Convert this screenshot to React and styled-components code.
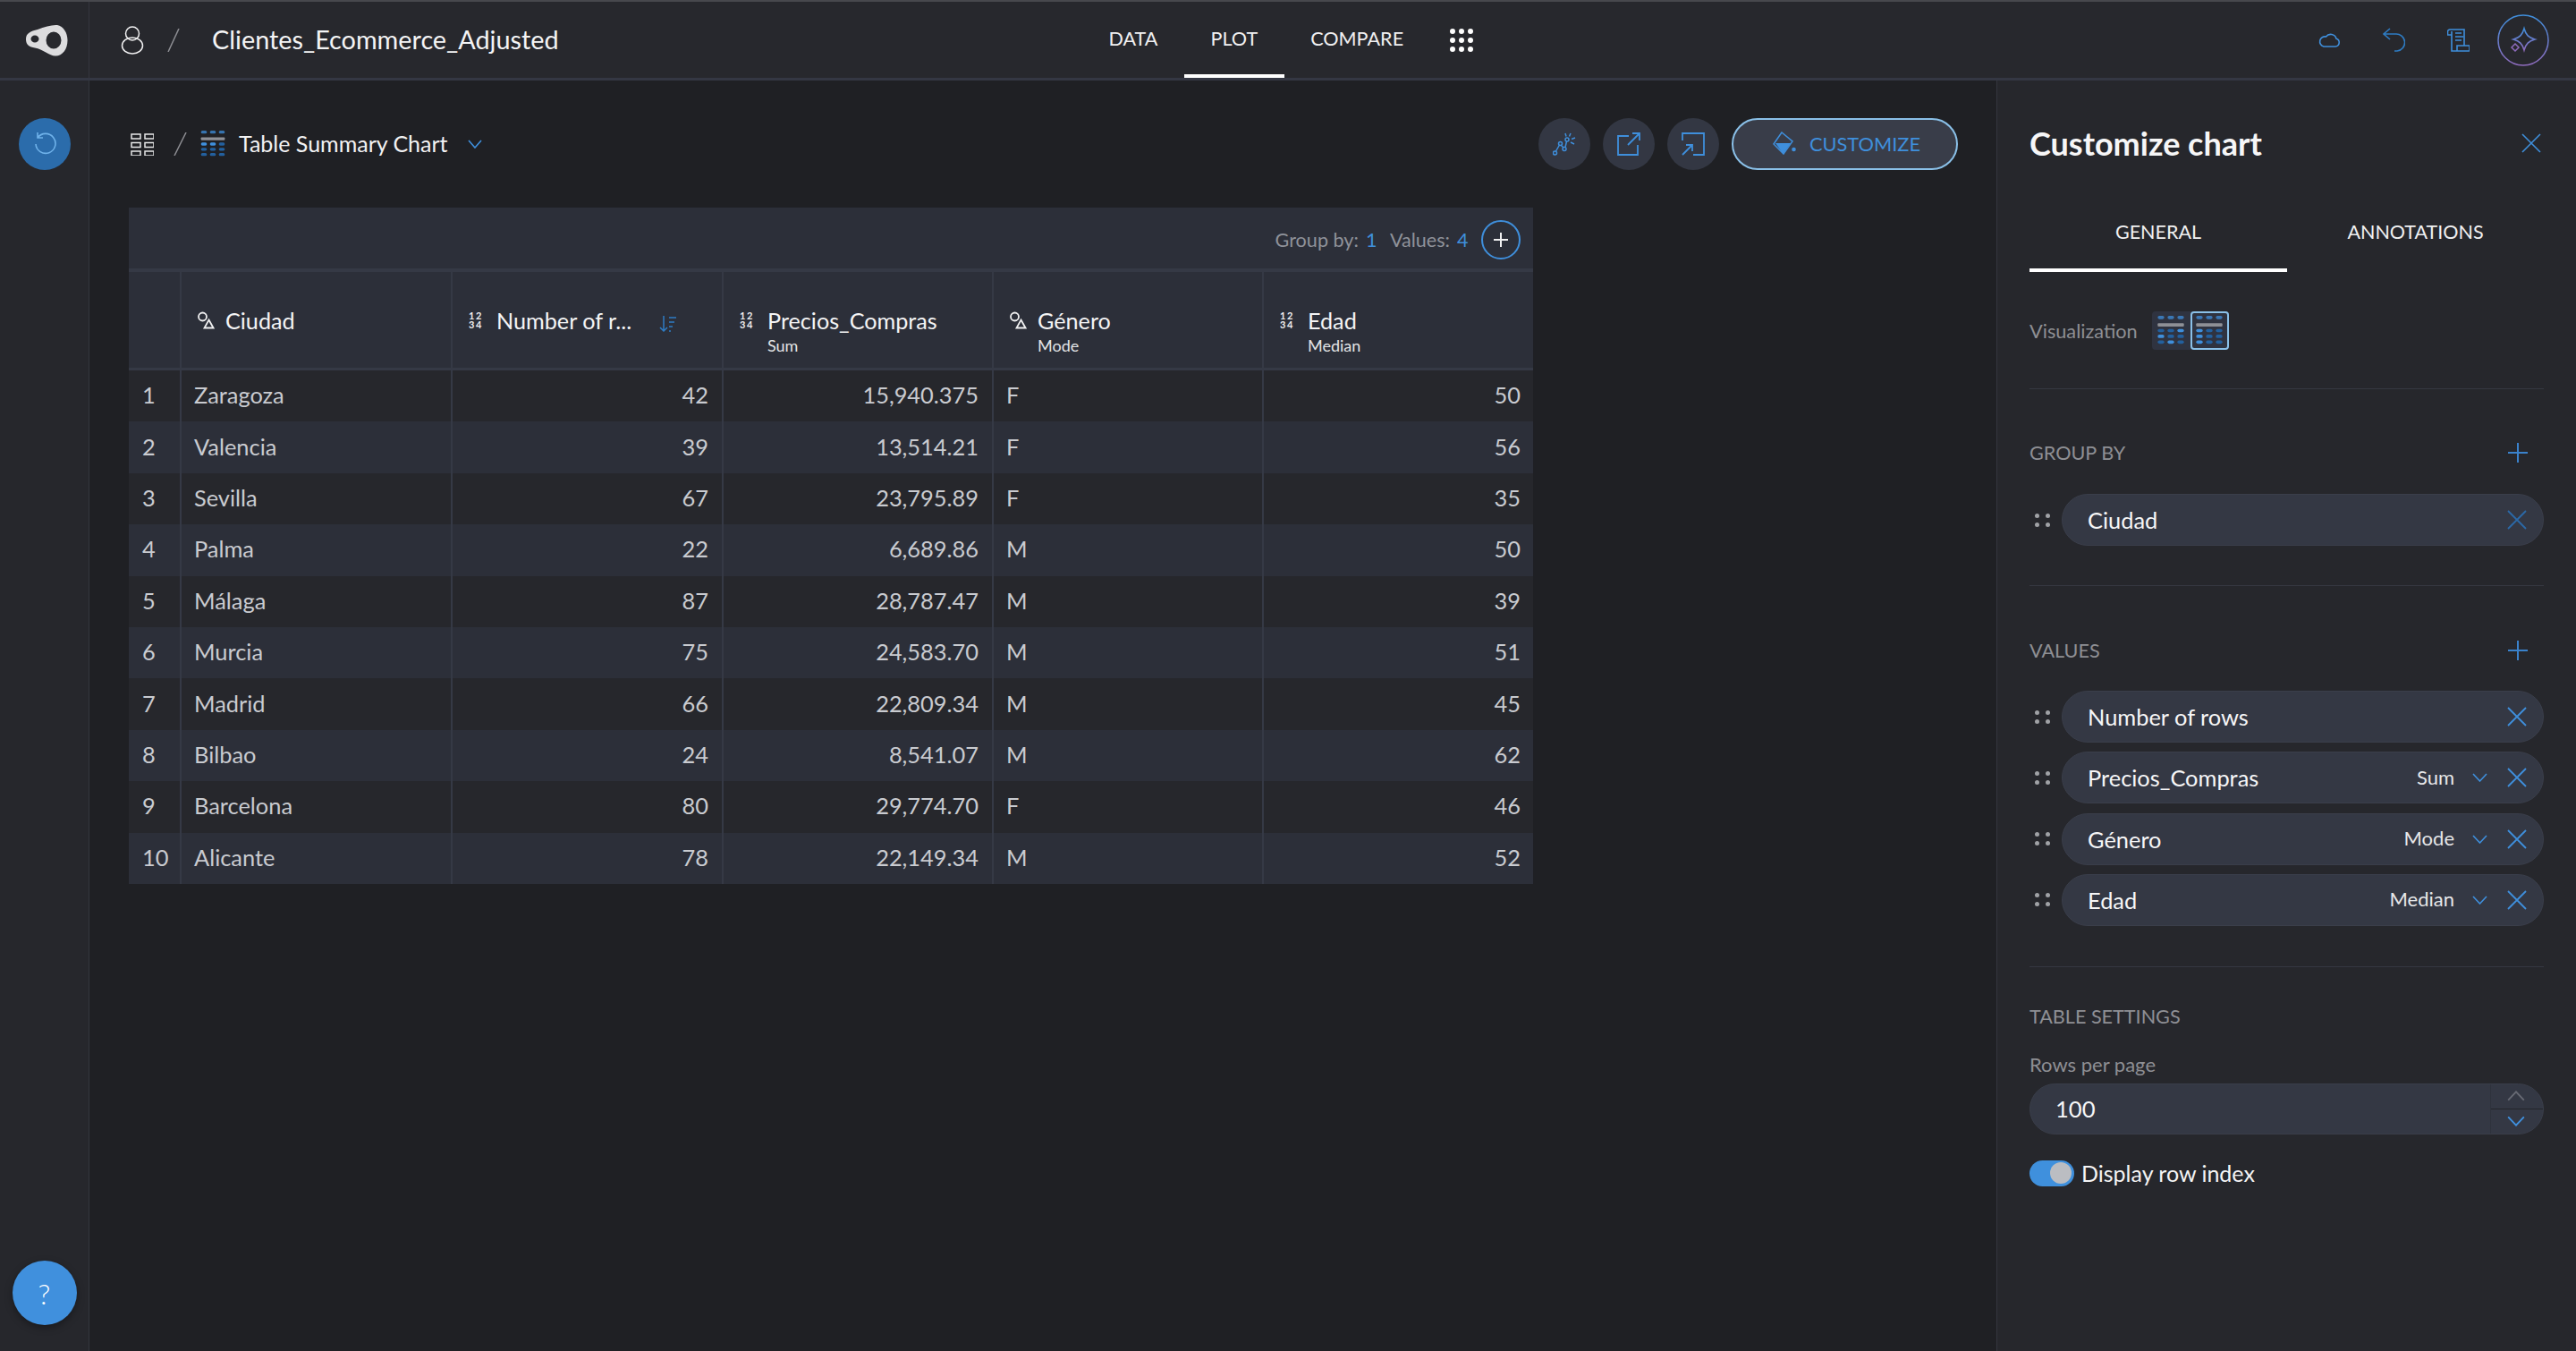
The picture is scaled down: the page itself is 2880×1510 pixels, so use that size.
import React from 'react'
import styled, { createGlobalStyle } from 'styled-components'

const blue = '#3f8fdc'
const cols = '57px 303px 303px 302px 302px 303px'

const Global = createGlobalStyle`
  html, body { margin: 0; padding: 0; background: #1f2024; }
  * { box-sizing: border-box; }
  body { font-family: Lato, "Open Sans", sans-serif; color: #fff; }
`
const Page = styled.div`
  width: 2880px;
  height: 1510px;
  display: flex;
  flex-direction: column;
  overflow: hidden;
`
const Header = styled.header`
  height: 90px;
  flex: none;
  display: flex;
  align-items: stretch;
  background: #27282d;
  border-top: 2px solid #47484d;
  border-bottom: 3px solid #343743;
`
const HeaderLeft = styled.div`
  flex: 0 0 1210px;
  display: flex;
  align-items: center;
`
const LogoCell = styled.div`
  width: 100px;
  height: 100%;
  display: flex;
  align-items: center;
  padding-left: 28px;
  border-right: 1px solid #34363e;
`
const UserIcon = styled.svg`
  margin-left: 35px;
`
const HeaderSlash = styled.svg`
  margin-left: 26px;
`
const Title = styled.div`
  margin-left: 36px;
  padding-bottom: 2px;
  font-size: 28.8px;
  line-height: 34px;
  color: #f4f4f5;
`
const Nav = styled.nav`
  display: flex;
  align-items: stretch;
`
const NavItem = styled.div`
  padding: 1px 29.5px 0;
  display: flex;
  align-items: center;
  font-size: 21.6px;
  color: #f0f0f1;
  height: 85px;
  margin-bottom: -3px;
  border-bottom: 4px solid ${p => (p.$active ? '#fff' : 'transparent')};
`
const Dots = styled.div`
  display: grid;
  grid-template-columns: repeat(3, 6px);
  gap: 4px;
  align-self: center;
  margin-left: 22.5px;
  span {
    width: 6px;
    height: 6px;
    border-radius: 50%;
    background: #fff;
  }
`
const HeaderRight = styled.div`
  flex: 1;
  display: flex;
  align-items: center;
  justify-content: flex-end;
  padding-right: 30px;
  gap: 47px;
`
const AiButton = styled.svg`
  margin-left: -16px;
`
const Body = styled.div`
  flex: 1;
  display: flex;
  min-height: 0;
`
const Sidebar = styled.aside`
  width: 100px;
  flex: none;
  display: flex;
  flex-direction: column;
  align-items: center;
  justify-content: space-between;
  padding: 42px 0 29px;
  background: #26272c;
  border-right: 1px solid #34363e;
`
const RefreshButton = styled.div`
  width: 58px;
  height: 58px;
  margin-left: 1px;
  border-radius: 50%;
  background: #2b6cab;
  display: flex;
  align-items: center;
  justify-content: center;
`
const HelpButton = styled.div`
  width: 72px;
  height: 72px;
  border-radius: 50%;
  background: #4090dd;
  box-shadow: 0 3px 8px rgba(0, 0, 0, .35);
  display: flex;
  align-items: center;
  justify-content: center;
  font-size: 32px;
  font-weight: 300;
  color: #fff;
`
const Main = styled.main`
  flex: 1;
  min-width: 0;
  padding: 42px 43px 0 44px;
  background: #1f2024;
`
const Toolbar = styled.div`
  display: flex;
  align-items: center;
  justify-content: space-between;
  height: 58px;
`
const Crumbs = styled.div`
  display: flex;
  align-items: center;
  margin-left: 2px;
`
const CrumbSlash = styled.svg`
  margin: 0 14px 0 22px;
`
const CrumbText = styled.span`
  margin-left: 14px;
  padding-bottom: 2px;
  font-size: 25px;
  color: #f2f2f3;
`
const CrumbChevron = styled.svg`
  margin-left: 22px;
`
const Actions = styled.div`
  display: flex;
  align-items: center;
  gap: 14px;
`
const RoundButton = styled.div`
  width: 58px;
  height: 58px;
  border-radius: 50%;
  background: #333743;
  display: flex;
  align-items: center;
  justify-content: center;
`
const CustomizeButton = styled.div`
  width: 253px;
  height: 58px;
  border-radius: 29px;
  background: #393d49;
  border: 2px solid #8ac0e8;
  display: flex;
  align-items: center;
  justify-content: center;
  gap: 15px;
  padding: 0 0 2px 4px;
  font-size: 21.8px;
  color: ${blue};
`
const Table = styled.section`
  width: 1570px;
  margin-top: 42px;
`
const TableTop = styled.div`
  height: 72px;
  display: flex;
  align-items: center;
  justify-content: flex-end;
  padding: 3px 14px 0 0;
  background: #2c2f39;
  border-bottom: 4px solid #353945;
  font-size: 21.6px;
  color: #8f929a;
`
const Count = styled.span`
  margin: 0 14.5px 0 8px;
  color: ${blue};
`
const AddCircle = styled.div`
  width: 44px;
  height: 44px;
  border-radius: 50%;
  border: 2px solid ${blue};
  display: flex;
  align-items: center;
  justify-content: center;
`
const HeadRow = styled.div`
  display: grid;
  grid-template-columns: ${cols};
  height: 110px;
  background: #2c2f39;
  border-bottom: 3px solid #353945;
`
const HeadCell = styled.div`
  display: grid;
  grid-template-columns: 18px auto;
  grid-template-rows: 26px 24px;
  column-gap: 14px;
  row-gap: 3px;
  align-content: start;
  align-items: center;
  padding: 41px 0 0 17px;
  border-left: 2px solid #353945;
  position: relative;
  &:first-child { border-left: 0; }
`
const HeadTitle = styled.div`
  font-size: 25.2px;
  color: #f4f4f5;
  white-space: nowrap;
`
const HeadSub = styled.div`
  grid-column: 2;
  font-size: 18px;
  color: #e3e4e6;
`
const NumIcon = styled.div`
  font-size: 11px;
  letter-spacing: 1.5px;
  color: #f0f0f1;
  font-weight: 700;
  text-align: center;
  span {
    display: block;
    line-height: 10px;
  }
`
const SortIcon = styled.svg`
  position: absolute;
  left: 231px;
  top: 49px;
`
const Row = styled.div`
  display: grid;
  grid-template-columns: ${cols};
  height: 57.4px;
  background: ${p => (p.$odd ? '#26272c' : '#2c2f39')};
`
const Cell = styled.div`
  display: flex;
  align-items: center;
  justify-content: ${p => (p.$right ? 'flex-end' : 'flex-start')};
  padding: 0 ${p => (p.$idx ? '0' : '15px')} 3px ${p => (p.$idx ? '15px' : '14px')};
  font-size: 25.4px;
  font-variant-numeric: tabular-nums;
  color: #c9cbd0;
  border-left: 2px solid #353945;
  &:first-child { border-left: 0; }
  &:last-child { padding-right: 14px; }
`
const Panel = styled.aside`
  width: 648px;
  flex: none;
  padding: 20px 36px 0 36px;
  background: #26272c;
  border-left: 1px solid #34363e;
`
const PanelHead = styled.div`
  height: 100px;
  display: flex;
  align-items: center;
  justify-content: space-between;
  margin-bottom: 8px;
`
const PanelTitle = styled.h2`
  margin: 0;
  font-size: 36px;
  font-weight: 700;
  color: #f6f6f7;
`
const CloseIcon = styled.svg`
  margin-right: 3px;
`
const Tabs = styled.div`
  display: grid;
  grid-template-columns: 288px 1fr;
`
const Tab = styled.div`
  height: 86px;
  display: flex;
  align-items: center;
  justify-content: center;
  font-size: 21.5px;
  color: #f0f0f1;
  border-bottom: 4px solid ${p => (p.$active ? '#fff' : 'transparent')};
`
const Section = styled.div`
  padding: ${p => p.$top}px 0 ${p => p.$bottom}px;
  border-bottom: ${p => (p.$last ? '0' : '1px solid #353741')};
`
const VizRow = styled.div`
  display: flex;
  align-items: center;
  gap: 16px;
  height: 43px;
  font-size: 21.7px;
  color: #8e8f94;
`
const VizGroup = styled.div`
  display: flex;
  width: 86px;
  height: 43px;
  border-radius: 4px;
  background: #2f3340;
`
const VizOption = styled.div`
  width: 43px;
  height: 43px;
  display: flex;
  align-items: center;
  justify-content: center;
  border-radius: 4px;
  border: ${p => (p.$active ? '2px solid #8ac0e8' : '2px solid transparent')};
`
const SectionHead = styled.div`
  height: 40px;
  display: flex;
  align-items: center;
  justify-content: space-between;
  padding-right: 18px;
  font-size: 21.6px;
  color: #8e8f94;
`
const ChipList = styled.div`
  display: flex;
  flex-direction: column;
  gap: 10.3px;
  margin-top: ${p => p.$top}px;
`
const ChipRow = styled.div`
  display: flex;
  align-items: center;
`
const Grip = styled.div`
  width: 36px;
  flex: none;
  display: grid;
  grid-template-columns: repeat(2, 5px);
  gap: 5px 7px;
  padding-left: 6px;
  span {
    width: 5px;
    height: 5px;
    border-radius: 50%;
    background: #a0a2a6;
  }
`
const Chip = styled.div`
  flex: 1;
  height: 58px;
  border-radius: 29px;
  display: flex;
  align-items: center;
  padding: 0 18px 0 28px;
  background: #343844;
  border: 1px solid #3a3e4a;
  font-size: 25.4px;
  color: #f6f6f7;
`
const ChipLabel = styled.span`
  flex: 1;
`
const Agg = styled.span`
  padding-bottom: 2px;
  font-size: 22px;
  color: #e6e7e9;
`
const AggChevron = styled.svg`
  margin: 0 22px 0 20px;
`
const SmallLabel = styled.div`
  height: 30px;
  margin-top: 19px;
  display: flex;
  align-items: center;
  font-size: 22px;
  color: #8e8f94;
`
const NumberInput = styled.div`
  height: 57px;
  margin-top: 6px;
  display: flex;
  border-radius: 29px;
  overflow: hidden;
  background: #343844;
  border: 1px solid #3a3e4a;
`
const NumberValue = styled.div`
  flex: 1;
  display: flex;
  align-items: center;
  padding-left: 28px;
  font-size: 25.6px;
  color: #f6f6f7;
`
const Stepper = styled.div`
  width: 59px;
  flex: none;
  display: flex;
  flex-direction: column;
  border-left: 1px solid #2f323c;
`
const StepButton = styled.div`
  flex: 1;
  display: flex;
  align-items: center;
  justify-content: center;
  padding-right: 2px;
  border-top: ${p => (p.$bottom ? '1px solid #23242a' : '0')};
`
const ToggleRow = styled.div`
  display: flex;
  align-items: center;
  gap: 8px;
  margin-top: 29px;
  height: 29px;
  font-size: 25px;
  color: #f4f4f5;
`
const Toggle = styled.div`
  width: 50px;
  height: 29px;
  border-radius: 15px;
  background: #3f90dd;
  display: flex;
  align-items: center;
  justify-content: flex-end;
  padding-right: 3px;
  span {
    width: 24px;
    height: 24px;
    border-radius: 50%;
    background: #bbbdc2;
  }
`

const Logo = () => (
  <svg width="48" height="36" viewBox="0 0 48 36">
    <path fill="#dcdcde" fillRule="evenodd" d="M1 17C1 10 6 8 14 6 22 3 30 .5 36 1c7 1 11.500 9 11.500 17 0 10-5.500 17.500-13.500 17.500-7 0-14-7.500-23-9C5 25.500 1 23 1 17zM11 12.500a4.500 4 0 1 0 0 8a4.500 4 0 1 0 0-8zM32 8.500a8.500 9.500 0 1 0 0 19a8.500 9.500 0 1 0 0-19z" />
  </svg>
)
const Cross = ({ size = 22, color = blue, width = 1.8 }) => (
  <svg width={size} height={size} viewBox="0 0 22 22">
    <path d="M1 1l20 20M21 1L1 21" stroke={color} strokeWidth={width} fill="none" />
  </svg>
)
const Plus = () => (
  <svg width="22" height="22" viewBox="0 0 22 22">
    <path d="M11 0v22M0 11h22" stroke="#3a82cc" strokeWidth="2" fill="none" />
  </svg>
)
const Chevron = ({ up, color = blue, w = 17, h = 10 }) => (
  <svg width={w} height={h} viewBox="0 0 17 10">
    <path d={up ? 'M1 9l7.500-8 7.500 8' : 'M1 1l7.500 8 7.500-8'} stroke={color} strokeWidth="1.6" fill="none" />
  </svg>
)
const CatIcon = () => (
  <svg width="20" height="20" viewBox="0 0 20 20">
    <circle cx="6.500" cy="6" r="4.500" stroke="#f0f0f1" strokeWidth="1.800" fill="none" />
    <path d="M13.500 9.500l5 9h-10z" stroke="#f0f0f1" strokeWidth="1.800" fill="none" />
  </svg>
)
const Num = () => (
  <NumIcon><span>12</span><span>34</span></NumIcon>
)
const TableGlyph = ({ w, h, strong = [] }) => {
  const xs = [0, 12, 24]
  const ys = [16, 23, 30]
  return (
    <svg width={w} height={h} viewBox="0 0 32 36">
      {xs.map(x => <rect key={x} x={x} y="0" width="8" height="4" rx="2" fill="#3f8fdc" opacity=".75" />)}
      <rect x="0" y="9" width="32" height="4" rx="1" fill="#8e9096" />
      {ys.map((y, r) => xs.map((x, c) => (
        <rect key={x} x={x} y={y} width="8" height="4" rx="2" fill={strong.includes(r * 3 + c) ? '#3f8fdc' : '#23609e'} />
      )))}
    </svg>
  )
}

const rows = [
  ['Zaragoza', '42', '15,940.375', 'F', '50'],
  ['Valencia', '39', '13,514.21', 'F', '56'],
  ['Sevilla', '67', '23,795.89', 'F', '35'],
  ['Palma', '22', '6,689.86', 'M', '50'],
  ['Málaga', '87', '28,787.47', 'M', '39'],
  ['Murcia', '75', '24,583.70', 'M', '51'],
  ['Madrid', '66', '22,809.34', 'M', '45'],
  ['Bilbao', '24', '8,541.07', 'M', '62'],
  ['Barcelona', '80', '29,774.70', 'F', '46'],
  ['Alicante', '78', '22,149.34', 'M', '52'],
]
const values = [
  { name: 'Number of rows' },
  { name: 'Precios_Compras', agg: 'Sum' },
  { name: 'Género', agg: 'Mode' },
  { name: 'Edad', agg: 'Median' },
]
const GripDots = () => (
  <Grip><span /><span /><span /><span /></Grip>
)

export default function App() {
  return (
    <Page>
      <Global />
      <Header>
        <HeaderLeft>
          <LogoCell><Logo /></LogoCell>
          <UserIcon width="26" height="33" viewBox="0 0 26 33">
            <circle cx="13" cy="9.500" r="7.500" stroke="#f0f0f1" strokeWidth="1.500" fill="none" />
            <ellipse cx="13" cy="23" rx="11.500" ry="9" stroke="#f0f0f1" strokeWidth="1.500" fill="none" />
          </UserIcon>
          <HeaderSlash width="14" height="26" viewBox="0 0 14 26">
            <path d="M13 0L1 26" stroke="#8e8f94" strokeWidth="1.500" />
          </HeaderSlash>
          <Title>Clientes_Ecommerce_Adjusted</Title>
        </HeaderLeft>
        <Nav>
          <NavItem>DATA</NavItem>
          <NavItem $active>PLOT</NavItem>
          <NavItem>COMPARE</NavItem>
          <Dots>{Array.from({ length: 9 }, (_, i) => <span key={i} />)}</Dots>
        </Nav>
        <HeaderRight>
          <svg width="25" height="17" viewBox="0 0 25 17">
            <path d="M6 16h13a4.500 4.500 0 0 0 1-8.800A6.500 6.500 0 0 0 8.500 5 5.500 5.500 0 0 0 6 16z" stroke={blue} strokeWidth="1.600" fill="none" />
          </svg>
          <svg width="25" height="27" viewBox="0 0 25 27">
            <path d="M8 1L1 7l7 6M1 7h13a9.500 9.500 0 0 1 2 19h-3" stroke="#2e7cc4" strokeWidth="1.600" fill="none" />
          </svg>
          <svg width="25" height="26" viewBox="0 0 25 26">
            <path d="M3 1h16v18M3 1a2.500 2.500 0 0 0-2.500 2.500V7H5M5 3v22h19a1 1 0 0 0 1-1v-5H11v6M9 5h7M9 9h9M9 13h7" stroke={blue} strokeWidth="1.600" fill="none" />
          </svg>
          <AiButton width="58" height="58" viewBox="0 0 58 58">
            <defs>
              <linearGradient id="ai" x1="0" y1="0" x2="0" y2="1">
                <stop offset="0" stopColor="#3f8fdc" />
                <stop offset="1" stopColor="#8f6bbd" />
              </linearGradient>
            </defs>
            <circle cx="29" cy="29" r="28" stroke="url(#ai)" strokeWidth="1.500" fill="none" />
            <path d="M30 16c2 7 5 10 12 12-7 2-10 5-12 12-2-7-5-10-12-12 7-2 10-5 12-12z" stroke="url(#ai)" strokeWidth="1.600" fill="none" />
            <path d="M20 33l4 4-4 4-4-4z" stroke="#8f6bbd" strokeWidth="1.500" fill="none" />
          </AiButton>
        </HeaderRight>
      </Header>
      <Body>
        <Sidebar>
          <RefreshButton>
            <svg width="26" height="28" viewBox="0 0 26 28">
              <path d="M5 7a11 11 0 1 1-2 7M5 1v6h6" stroke="#6fb2ea" strokeWidth="1.600" fill="none" />
            </svg>
          </RefreshButton>
          <HelpButton>?</HelpButton>
        </Sidebar>
        <Main>
          <Toolbar>
            <Crumbs>
              <svg width="26" height="25" viewBox="0 0 26 25">
                {[0, 9.500, 19].map(y => [0, 15].map(x => (
                  <rect key={x} x={x + 1} y={y + 1} width="10" height="5" stroke="#e8e8e9" strokeWidth="1.500" fill="none" />
                )))}
              </svg>
              <CrumbSlash width="15" height="26" viewBox="0 0 15 26">
                <path d="M14 0L1 26" stroke="#8e8f94" strokeWidth="1.500" />
              </CrumbSlash>
              <TableGlyph w={30} h={30} strong={[0, 1]} />
              <CrumbText>Table Summary Chart</CrumbText>
              <CrumbChevron width="16" height="10" viewBox="0 0 16 10">
                <path d="M1 1l7 8 7-8" stroke={blue} strokeWidth="1.600" fill="none" />
              </CrumbChevron>
            </Crumbs>
            <Actions>
              <RoundButton>
                <svg width="26" height="26" viewBox="0 0 26 26">
                  <g stroke={blue} strokeWidth="1.500" fill="none">
                    <circle cx="2.500" cy="23" r="2" />
                    <circle cx="8.500" cy="12.500" r="2" />
                    <circle cx="13" cy="18.500" r="2" />
                    <circle cx="16" cy="8" r="2" />
                    <path d="M3.500 21l4-7M9.500 14.500l2.500 2.500M14 16.500l1.500-6.500M14 1l1 3.500M20 1l-1.500 3.500M25 6l-4 1.500M24 13l-4-2" />
                  </g>
                </svg>
              </RoundButton>
              <RoundButton>
                <svg width="26" height="26" viewBox="0 0 26 26">
                  <path d="M13 4H1v21h22V14M12 14L25 1M17 1h8v8" stroke={blue} strokeWidth="1.800" fill="none" />
                </svg>
              </RoundButton>
              <RoundButton>
                <svg width="26" height="26" viewBox="0 0 26 26">
                  <path d="M1 9V1h24v24h-12M1 25l11-11M5 14h7v7" stroke={blue} strokeWidth="1.800" fill="none" />
                </svg>
              </RoundButton>
              <CustomizeButton>
                <svg width="26" height="26" viewBox="0 0 26 26">
                  <path d="M10 1l12 10-10 14L1 14z" stroke={blue} strokeWidth="1.500" fill="none" />
                  <path d="M3 13h17l-8.500 12z" fill={blue} />
                  <circle cx="23.500" cy="20" r="2.300" fill={blue} />
                </svg>
                CUSTOMIZE
              </CustomizeButton>
            </Actions>
          </Toolbar>
          <Table>
            <TableTop>
              Group by:<Count>1</Count>Values:<Count>4</Count>
              <AddCircle>
                <svg width="16" height="16" viewBox="0 0 16 16">
                  <path d="M8 0v16M0 8h16" stroke="#f0f0f1" strokeWidth="2" />
                </svg>
              </AddCircle>
            </TableTop>
            <HeadRow>
              <HeadCell />
              <HeadCell><CatIcon /><HeadTitle>Ciudad</HeadTitle></HeadCell>
              <HeadCell>
                <Num /><HeadTitle>Number of r...</HeadTitle>
                <SortIcon width="19" height="18" viewBox="0 0 19 18">
                  <path d="M5 0v17M1 13l4 4 4-4M11 2h8M11 7h6M11 12h4M11 17h2" stroke="#2e7cc4" strokeWidth="1.500" fill="none" />
                </SortIcon>
              </HeadCell>
              <HeadCell><Num /><HeadTitle>Precios_Compras</HeadTitle><HeadSub>Sum</HeadSub></HeadCell>
              <HeadCell><CatIcon /><HeadTitle>Género</HeadTitle><HeadSub>Mode</HeadSub></HeadCell>
              <HeadCell><Num /><HeadTitle>Edad</HeadTitle><HeadSub>Median</HeadSub></HeadCell>
            </HeadRow>
            {rows.map((r, i) => (
              <Row key={r[0]} $odd={i % 2 === 0}>
                <Cell $idx>{i + 1}</Cell>
                <Cell>{r[0]}</Cell>
                <Cell $right>{r[1]}</Cell>
                <Cell $right>{r[2]}</Cell>
                <Cell>{r[3]}</Cell>
                <Cell $right>{r[4]}</Cell>
              </Row>
            ))}
          </Table>
        </Main>
        <Panel>
          <PanelHead>
            <PanelTitle>Customize chart</PanelTitle>
            <CloseIcon width="22" height="22" viewBox="0 0 22 22">
              <path d="M1 1l20 20M21 1L1 21" stroke={blue} strokeWidth="1.600" fill="none" />
            </CloseIcon>
          </PanelHead>
          <Tabs>
            <Tab $active>GENERAL</Tab>
            <Tab>ANNOTATIONS</Tab>
          </Tabs>
          <Section $top={44} $bottom={43}>
            <VizRow>
              Visualization
              <VizGroup>
                <VizOption><TableGlyph w={30} h={33} strong={[2, 3, 7]} /></VizOption>
                <VizOption $active><TableGlyph w={30} h={33} strong={[0, 3, 6]} /></VizOption>
              </VizGroup>
            </VizRow>
          </Section>
          <Section $top={51} $bottom={44}>
            <SectionHead>GROUP BY<Plus /></SectionHead>
            <ChipList $top={26}>
              <ChipRow>
                <GripDots />
                <Chip>
                  <ChipLabel>Ciudad</ChipLabel>
                  <Cross color="#2b69a8" />
                </Chip>
              </ChipRow>
            </ChipList>
          </Section>
          <Section $top={52} $bottom={45}>
            <SectionHead>VALUES<Plus /></SectionHead>
            <ChipList $top={25}>
              {values.map(v => (
                <ChipRow key={v.name}>
                  <GripDots />
                  <Chip>
                    <ChipLabel>{v.name}</ChipLabel>
                    {v.agg && <Agg>{v.agg}</Agg>}
                    {v.agg && <AggChevron width="17" height="10" viewBox="0 0 17 10"><path d="M1 1l7.500 8 7.500-8" stroke={blue} strokeWidth="1.600" fill="none" /></AggChevron>}
                    <Cross />
                  </Chip>
                </ChipRow>
              ))}
            </ChipList>
          </Section>
          <Section $top={35} $bottom={0} $last>
            <SectionHead>TABLE SETTINGS</SectionHead>
            <SmallLabel>Rows per page</SmallLabel>
            <NumberInput>
              <NumberValue>100</NumberValue>
              <Stepper>
                <StepButton><Chevron up color="#666973" w={20} h={12} /></StepButton>
                <StepButton $bottom><Chevron w={20} h={12} /></StepButton>
              </Stepper>
            </NumberInput>
            <ToggleRow>
              <Toggle><span /></Toggle>
              Display row index
            </ToggleRow>
          </Section>
        </Panel>
      </Body>
    </Page>
  )
}
